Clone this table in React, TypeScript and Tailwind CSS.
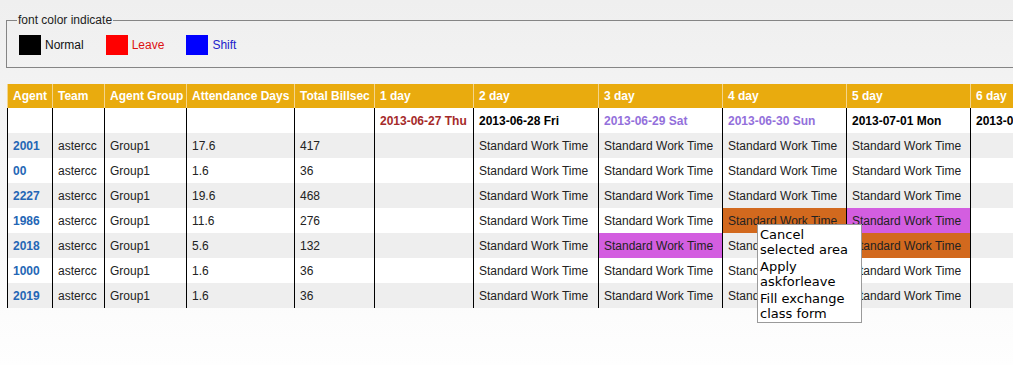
import React from 'react';

const COLS = 'grid grid-cols-[45px_52px_82px_108px_80px_99px_125px_124px_124px_124px_124px]';

const HEADERS = ['Agent', 'Team', 'Agent Group', 'Attendance Days', 'Total Billsec', '1 day', '2 day', '3 day', '4 day', '5 day', '6 day'];

// date row: [text, colour class]
const DATES: [string, string][] = [
  ['2013-06-27 Thu', 'text-[#a52a2a]'],
  ['2013-06-28 Fri', 'text-black'],
  ['2013-06-29 Sat', 'text-[#9370db]'],
  ['2013-06-30 Sun', 'text-[#9370db]'],
  ['2013-07-01 Mon', 'text-black'],
  ['2013-07-02 Tue', 'text-black'],
];

type Mark = '' | 'leave' | 'shift';

const ROWS: { id: string; att: string; bill: string; marks?: Mark[] }[] = [
  { id: '2001', att: '17.6', bill: '417' },
  { id: '00', att: '1.6', bill: '36' },
  { id: '2227', att: '19.6', bill: '468' },
  { id: '1986', att: '11.6', bill: '276', marks: ['', '', 'leave', 'shift'] },
  { id: '2018', att: '5.6', bill: '132', marks: ['', 'shift', '', 'leave'] },
  { id: '1000', att: '1.6', bill: '36' },
  { id: '2019', att: '1.6', bill: '36' },
];

const cell = 'border-l border-black pl-[5px] flex items-center whitespace-nowrap overflow-hidden';

export default function App() {
  return (
    <div className="relative w-[1013px] h-[365px] overflow-hidden bg-gradient-to-b from-[#efefef] to-[#fefefe] font-['Liberation_Sans',Arial,sans-serif] text-[12px] text-[#222]">
      {/* legend box */}
      <fieldset className="mt-[13px] ml-[6px] w-[1100px] border border-[#858585] pl-[10px] pt-[8px] pb-[12px]">
        <legend className="px-[1px] leading-[14px] text-[#222]">font color indicate</legend>
        <div className="flex items-center ml-[2px]">
          <span className="w-[22px] h-[20px] bg-black" />
          <span className="ml-[4px] text-[#111]">Normal</span>
          <span className="ml-[22px] w-[22px] h-[20px] bg-[#ff0000]" />
          <span className="ml-[4px] text-[#dd1111]">Leave</span>
          <span className="ml-[22px] w-[22px] h-[20px] bg-[#0000ff]" />
          <span className="ml-[4px] text-[#2222cc]">Shift</span>
        </div>
      </fieldset>

      {/* schedule table */}
      <div className="mt-[16px] ml-[7px] w-[1100px]">
        <div className={`${COLS} h-[24px] bg-[#e9ab0e] text-white font-bold`}>
          {HEADERS.map((h) => (
            <div key={h} className="border-l border-[#f4d58c] pl-[5px] flex items-center whitespace-nowrap">
              {h}
            </div>
          ))}
        </div>

        <div className={`${COLS} h-[25px] bg-white font-bold`}>
          {[0, 1, 2, 3, 4].map((i) => (
            <div key={i} className={cell} />
          ))}
          {DATES.map(([d, c]) => (
            <div key={d} className={`${cell} ${c}`}>
              {d}
            </div>
          ))}
        </div>

        {ROWS.map((r, idx) => (
          <div key={r.id} className={`${COLS} h-[25px] ${idx % 2 === 0 ? 'bg-[#eeeeee]' : 'bg-white'}`}>
            <div className={`${cell} font-bold text-[#2466b5]`}>{r.id}</div>
            <div className={cell}>astercc</div>
            <div className={cell}>Group1</div>
            <div className={cell}>{r.att}</div>
            <div className={cell}>{r.bill}</div>
            <div className={cell} />
            {[0, 1, 2, 3].map((d) => {
              const m = r.marks ? r.marks[d] : '';
              const bg = m === 'leave' ? 'bg-[#d2691e]' : m === 'shift' ? 'bg-[#d35ee0]' : '';
              return (
                <div key={d} className={`${cell} ${bg}`}>
                  Standard Work Time
                </div>
              );
            })}
            <div className={cell} />
          </div>
        ))}
      </div>

      {/* right-click menu */}
      <div className="absolute left-[757px] top-[224px] w-[105px] h-[99px] bg-white border border-[#9a9a9a] px-[2px] pt-[2px] flex flex-col gap-[2px] font-['DejaVu_Sans',Verdana,sans-serif] text-[13px] leading-[15px] text-black">
        <div>Cancel selected area</div>
        <div>Apply askforleave</div>
        <div>Fill exchange class form</div>
      </div>
    </div>
  );
}
